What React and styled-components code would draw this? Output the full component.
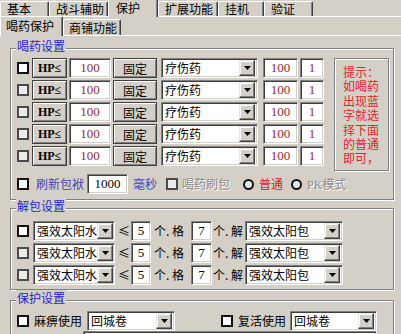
import React from 'react';
import styled, { createGlobalStyle } from 'styled-components';

const GlobalStyle = createGlobalStyle`
  html, body { margin: 0; padding: 0; background: #d4d0c8; }
  body {
    font-family: "Noto Sans CJK SC", "Liberation Sans", sans-serif;
    font-size: 12px;
    color: #000;
  }
`;

const Window = styled.div`
  width: 401px;
  height: 334px;
  overflow: hidden;
  background: #d4d0c8;
  display: flex;
  flex-direction: column;
`;

const TabStrip = styled.div`
  flex: none;
  box-sizing: border-box;
  height: ${(p) => p.$h}px;
  display: flex;
  align-items: flex-end;
  border-bottom: 1px solid #fff;
`;

const Tab = styled.div`
  box-sizing: border-box;
  position: relative;
  z-index: ${(p) => (p.$active ? 1 : 0)};
  width: ${(p) => p.$w}px;
  height: ${(p) => p.$h}px;
  margin-bottom: ${(p) => (p.$active ? -1 : 0)}px;
  padding-left: ${(p) => p.$pl}px;
  background: #d4d0c8;
  border-top: 1px solid #fff;
  border-left: 1px solid #fff;
  border-right: 1px solid #404040;
  box-shadow: inset -1px 0 #808080;
  border-radius: 2px 2px 0 0;
  font-size: 12px;
  line-height: ${(p) => p.$lh}px;
  white-space: nowrap;
`;

const Panel = styled.div`
  flex: 1;
  padding-left: 10px;
`;

const Group = styled.div`
  position: relative;
  box-sizing: border-box;
  width: 384px;
  height: ${(p) => p.$h}px;
  margin-top: ${(p) => p.$mt}px;
  padding: ${(p) => p.$pt}px 0 0 6px;
  border: 1px solid #808080;
  box-shadow: inset 1px 1px #fff, 1px 1px #fff;
`;

const Legend = styled.span`
  position: absolute;
  top: -11px;
  left: 5px;
  padding: 0 1px;
  background: #d4d0c8;
  color: #2626c8;
  font-size: 12px;
  line-height: 16px;
`;

const TopSection = styled.div`
  display: flex;
  align-items: flex-start;
`;

const RowsCol = styled.div`
  flex: none;
  width: 317px;
  display: flex;
  flex-direction: column;
  gap: ${(p) => p.$gap}px;
`;

const Row = styled.div`
  display: flex;
  align-items: center;
  height: 20px;
  margin-top: ${(p) => p.$mt || 0}px;
`;

const Check = styled.span`
  flex: none;
  box-sizing: border-box;
  width: 12px;
  height: 12px;
  margin-left: ${(p) => p.$ml || 0}px;
  border: 2px solid ${(p) => (p.$dim ? '#4a4a4a' : '#111')};
  background: ${(p) => (p.$dim ? '#ececec' : '#fff')};
`;

const Radio = styled.span`
  flex: none;
  box-sizing: border-box;
  width: 11px;
  height: 11px;
  margin-left: ${(p) => p.$ml || 0}px;
  border: 2px solid #111;
  border-radius: 50%;
  background: #e6e6e6;
`;

const Btn = styled.div`
  flex: none;
  box-sizing: border-box;
  width: ${(p) => p.$w}px;
  height: 20px;
  margin-left: ${(p) => p.$ml || 0}px;
  border: 1px solid #404040;
  box-shadow: inset 1px 1px #fff, inset -1px -1px #808080;
  background: #d4d0c8;
  display: flex;
  align-items: center;
  justify-content: center;
  font-family: ${(p) => (p.$serif ? '"Liberation Serif", "Noto Sans CJK SC", serif' : '"Noto Sans CJK SC", sans-serif')};
  font-size: 12px;
  font-weight: ${(p) => (p.$serif ? 700 : 400)};
  white-space: nowrap;
`;

const Field = styled.div`
  flex: none;
  box-sizing: border-box;
  width: ${(p) => p.$w}px;
  height: 20px;
  margin-left: ${(p) => p.$ml || 0}px;
  border: 1px solid;
  border-color: #808080 #fff #fff #808080;
  box-shadow: inset 1px 1px #404040, inset -1px -1px #d4d0c8;
  background: #fff;
  display: flex;
  align-items: center;
  justify-content: center;
  font-family: "Liberation Serif", "Noto Sans CJK SC", serif;
  font-size: 13px;
  color: ${(p) => p.$color || '#000'};
`;

const Combo = styled.div`
  flex: none;
  box-sizing: border-box;
  width: ${(p) => p.$w}px;
  height: 20px;
  margin-left: ${(p) => p.$ml || 0}px;
  padding: 2px;
  border: 1px solid;
  border-color: #808080 #fff #fff #808080;
  box-shadow: inset 1px 1px #404040, inset -1px -1px #d4d0c8;
  background: #fff;
  display: flex;
  align-items: center;
`;

const ComboText = styled.span`
  flex: 1;
  padding-left: 1px;
  font-size: 12px;
  line-height: 16px;
  white-space: nowrap;
`;

const ComboBtn = styled.span`
  flex: none;
  box-sizing: border-box;
  width: 16px;
  height: 16px;
  background: #d4d0c8;
  border: 1px solid;
  border-color: #e8e8e8 #404040 #404040 #e8e8e8;
  box-shadow: inset -1px -1px #808080, inset 1px 1px #fff;
  display: flex;
  align-items: center;
  justify-content: center;
`;

const Label = styled.span`
  flex: none;
  width: ${(p) => (p.$w ? `${p.$w}px` : 'auto')};
  margin-left: ${(p) => p.$ml || 0}px;
  color: ${(p) => p.$color || '#000'};
  font-size: 12px;
  line-height: 16px;
  white-space: nowrap;
  text-align: ${(p) => p.$align || 'left'};
  text-shadow: ${(p) => (p.$disabled ? '1px 1px #fff' : 'none')};
`;

const Serif = styled.span`
  font-family: "Liberation Serif", serif;
  font-size: 12px;
`;

const Hint = styled.div`
  flex: none;
  box-sizing: border-box;
  width: 55px;
  height: 113px;
  padding: 6px 0 0 8px;
  border: 1px solid #808080;
  box-shadow: inset 1px 1px #fff, 1px 1px #fff;
  color: #e3262a;
  font-size: 12px;
  line-height: 14.4px;
`;

const Arrow = () => (
  <svg width="7" height="4" viewBox="0 0 7 4">
    <polygon points="0,0 7,0 3.5,4" fill="#000" />
  </svg>
);

const Select = ({ w, ml, text }) => (
  <Combo $w={w} $ml={ml}>
    <ComboText>{text}</ComboText>
    <ComboBtn>
      <Arrow />
    </ComboBtn>
  </Combo>
);

const topTabs = [
  { t: '基本', w: 49 },
  { t: '战斗辅助', w: 59 },
  { t: '保护', w: 50, active: true },
  { t: '扩展功能', w: 60 },
  { t: '挂机', w: 46 },
  { t: '验证', w: 49 },
];

const hintLines = ['提示：', '如喝药', '出现蓝', '字就选', '择下面', '的普通', '即可，'];

export default function App() {
  return (
    <>
      <GlobalStyle />
      <Window>
        <TabStrip $h={17}>
          {topTabs.map((t) => (
            <Tab
              key={t.t}
              $w={t.w}
              $active={t.active}
              $h={t.active ? 18 : 15}
              $lh={t.active ? 16 : 14}
              $pl={t.active ? 7 : 6}
            >
              {t.t}
            </Tab>
          ))}
        </TabStrip>
        <TabStrip $h={19}>
          <Tab $w={63} $active $h={20} $lh={17} $pl={5}>喝药保护</Tab>
          <Tab $w={58} $h={16} $lh={15} $pl={5}>商铺功能</Tab>
        </TabStrip>
        <Panel>
          <Group $h={152} $mt={12} $pt={9}>
            <Legend>喝药设置</Legend>
            <TopSection>
              <RowsCol $gap={2}>
                {[0, 1, 2, 3, 4].map((i) => (
                  <Row key={i}>
                    <Check $dim={i > 0} />
                    <Btn $w={35} $ml={3} $serif>HP≤</Btn>
                    <Field $w={42} $ml={2} $color="#9a2a2a">100</Field>
                    <Btn $w={44} $ml={2}>固定</Btn>
                    <Select w={97} ml={4} text="疗伤药" />
                    <Field $w={35} $ml={5} $color="#9a2a2a">100</Field>
                    <Field $w={24} $ml={2} $color="#9a2a2a">1</Field>
                  </Row>
                ))}
              </RowsCol>
              <Hint>
                {hintLines.map((l, i) => (
                  <React.Fragment key={l}>
                    {i > 0 && <br />}
                    {l}
                  </React.Fragment>
                ))}
              </Hint>
            </TopSection>
            <Row $mt={3}>
              <Check />
              <Label $ml={7} $color="#4646b8">刷新包袱</Label>
              <Field $w={41} $ml={3}>1000</Field>
              <Label $ml={5} $color="#4646b8">毫秒</Label>
              <Check $ml={9} $dim />
              <Label $ml={4} $color="#8a8a8a" $disabled>喝药刷包</Label>
              <Radio $ml={13} />
              <Label $ml={5} $color="#e02020">普通</Label>
              <Radio $ml={8} />
              <Label $ml={5} $color="#8a8a8a" $disabled>
                <Serif>PK</Serif>模式
              </Label>
            </Row>
          </Group>

          <Group $h={82} $mt={8} $pt={12}>
            <Legend>解包设置</Legend>
            <RowsCol $gap={2}>
              {[0, 1, 2].map((i) => (
                <Row key={i}>
                  <Check $dim={i > 0} />
                  <Select w={82} ml={4} text="强效太阳水" />
                  <Label $w={10} $ml={3} $align="center">≤</Label>
                  <Field $w={20} $ml={3}>5</Field>
                  <Label $w={35} $ml={3}>个. 格</Label>
                  <Field $w={21} $ml={2}>7</Field>
                  <Label $w={29} $ml={1}>个. 解</Label>
                  <Select w={98} ml={3} text="强效太阳包" />
                </Row>
              ))}
            </RowsCol>
          </Group>

          <Group $h={60} $mt={10} $pt={10}>
            <Legend>保护设置</Legend>
            <Row>
              <Check />
              <Label $ml={5}>麻痹使用</Label>
              <Select w={88} ml={5} text="回城卷" />
              <Check $ml={46} />
              <Label $ml={5}>复活使用</Label>
              <Select w={87} ml={4} text="回城卷" />
            </Row>
            <Row>
              <Field $w={294} $ml={66} />
            </Row>
          </Group>
        </Panel>
      </Window>
    </>
  );
}
